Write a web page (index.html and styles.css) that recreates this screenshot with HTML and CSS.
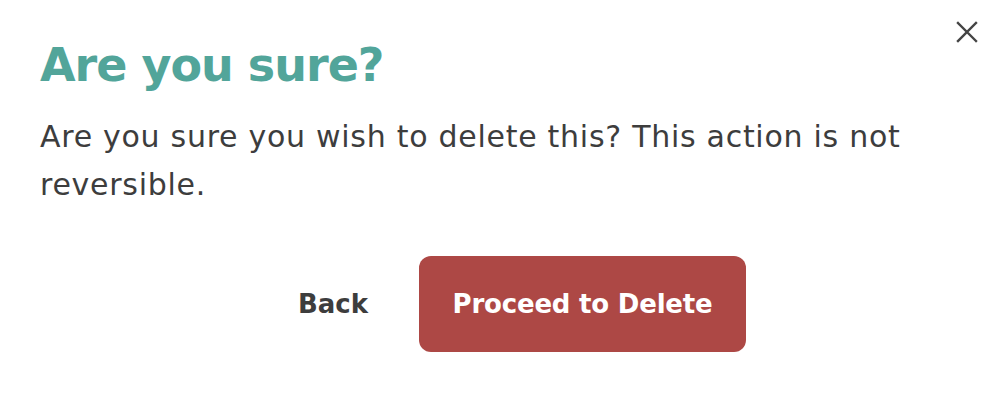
FILE: index.html
```html
<!DOCTYPE html>
<html lang="en">
<head>
    <meta charset="UTF-8">
    <title>Confirm delete</title>
    <link rel="stylesheet" href="styles.css">
</head>
<body>
    <div class="modal">
        <button class="close" aria-label="Close">
            <svg width="22" height="22" viewBox="0 0 22 22">
                <path d="M2 2 L20 20 M20 2 L2 20" stroke="#444" stroke-width="2.4" stroke-linecap="square"/>
            </svg>
        </button>
        <div class="content">
            <h1>Are you sure?</h1>
            <p>Are you sure you wish to delete this? This action is not reversible.</p>
            <div class="actions">
                <button class="back">Back</button>
                <button class="delete">Proceed to Delete</button>
            </div>
        </div>
    </div>
</body>
</html>
```

FILE: styles.css
```css
/* General Styles */
body {
    margin: 0;
    padding: 0;
    background: #ffffff;
    font-family: "DejaVu Sans", "Open Sans", sans-serif;
    color: #3d3d3d;
}

.modal {
    position: relative;
    width: 1004px;
    height: 406px;
}

.close {
    position: absolute;
    top: 21px;
    right: 26px;
    padding: 0;
    border: none;
    background: none;
    cursor: pointer;
}

.close svg {
    display: block;
}

.content {
    padding: 33px 0 0 40px;
}

h1 {
    margin: 0;
    font-size: 46px;
    font-weight: 700;
    letter-spacing: -1px;
    line-height: 64px;
    color: #52a59a;
}

p {
    margin: 16px 0 0 0;
    width: 900px;
    font-size: 30px;
    letter-spacing: 0.72px;
    line-height: 48px;
    color: #3d3d3d;
}

/* Buttons */
.actions {
    display: flex;
    justify-content: center;
    align-items: center;
    gap: 51px;
    margin-top: 47px;
}

button {
    font-family: inherit;
}

.back {
    padding: 0;
    border: none;
    background: none;
    font-size: 26px;
    font-weight: 700;
    color: #3d3d3d;
    cursor: pointer;
}

.delete {
    width: 327px;
    height: 96px;
    border: none;
    border-radius: 12px;
    background: #ad4845;
    color: #ffffff;
    font-size: 26px;
    font-weight: 700;
    letter-spacing: -0.2px;
    cursor: pointer;
}
```
